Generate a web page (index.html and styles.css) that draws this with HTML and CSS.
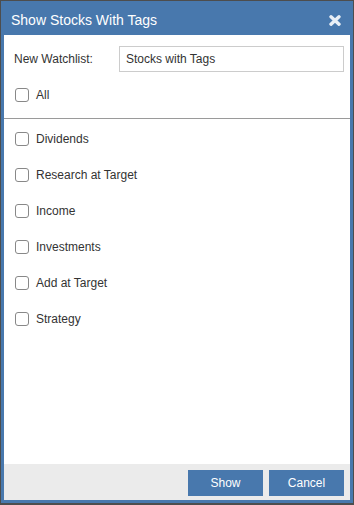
FILE: index.html
```html
<!DOCTYPE html>
<html>
<head>
    <link rel="stylesheet" href="styles.css">
</head>
<body>
    <div class="dialog">
        <div class="dialog-header">
            <span class="dialog-title">Show Stocks With Tags</span>
            <svg class="close-icon" width="12" height="11" viewBox="0 0 12 11">
                <path d="M2 1.8 L10 9.2 M10 1.8 L2 9.2" stroke="#e9eff6" stroke-width="3.4" stroke-linecap="round"/>
            </svg>
        </div>
        <div class="dialog-body">
            <div class="watchlist-row">
                <label class="watchlist-label">New Watchlist:</label>
                <div class="watchlist-input">Stocks with Tags</div>
            </div>
            <div class="check-row all-row">
                <span class="check-box"></span>
                <span>All</span>
            </div>
            <div class="separator"></div>
            <div class="tag-list">
                <div class="check-row"><span class="check-box"></span><span>Dividends</span></div>
                <div class="check-row"><span class="check-box"></span><span>Research at Target</span></div>
                <div class="check-row"><span class="check-box"></span><span>Income</span></div>
                <div class="check-row"><span class="check-box"></span><span>Investments</span></div>
                <div class="check-row"><span class="check-box"></span><span>Add at Target</span></div>
                <div class="check-row"><span class="check-box"></span><span>Strategy</span></div>
            </div>
        </div>
        <div class="dialog-footer">
            <button class="btn">Show</button>
            <button class="btn">Cancel</button>
        </div>
    </div>
</body>
</html>
```

FILE: styles.css
```css
body {
    margin: 0;
    padding: 1px 1px 2px 1px;
    background-color: #4d4d4d;
    font-family: "Liberation Sans", Arial, sans-serif;
    color: #333;
}

.dialog {
    width: 346px;
    height: 496px;
    border: 3px solid #4878ad;
    background: #fff;
    display: flex;
    flex-direction: column;
}

.dialog-header {
    height: 31px;
    margin-top: -3px;
    padding-top: 3px;
    background: #4878ad;
    display: flex;
    align-items: center;
    justify-content: space-between;
    padding-left: 7px;
    padding-right: 9px;
}

.dialog-title {
    color: #fff;
    font-size: 14px;
    margin-top: 1px;
}

.close-icon {
    margin-top: 2px;
}

.dialog-body {
    flex: 1;
}

.watchlist-row {
    display: flex;
    align-items: center;
    padding: 11px 6px 0 10px;
}

.watchlist-label {
    width: 105px;
    font-size: 12px;
}

.watchlist-input {
    flex: 1;
    height: 24px;
    line-height: 24px;
    border: 1px solid #ccc;
    padding-left: 6px;
    font-size: 12px;
}

.check-row {
    display: flex;
    align-items: center;
    height: 36px;
    padding-left: 11px;
    font-size: 12px;
}

.all-row {
    margin-top: 5px;
}

.check-box {
    width: 12px;
    height: 12px;
    border: 1px solid #888;
    border-radius: 3px;
    margin-right: 7px;
}

.separator {
    height: 1px;
    background: #9a9a9a;
    margin-top: 5px;
}

.tag-list {
    padding-top: 2px;
}

.dialog-footer {
    height: 36px;
    background: #ebebeb;
    display: flex;
    justify-content: flex-end;
    gap: 6px;
    padding: 6px 6px 0 0;
    box-sizing: border-box;
}

.btn {
    width: 75px;
    height: 26px;
    border: none;
    background: #4878ad;
    color: #fff;
    font-family: "Liberation Sans", Arial, sans-serif;
    font-size: 12px;
    padding: 0;
}
```
